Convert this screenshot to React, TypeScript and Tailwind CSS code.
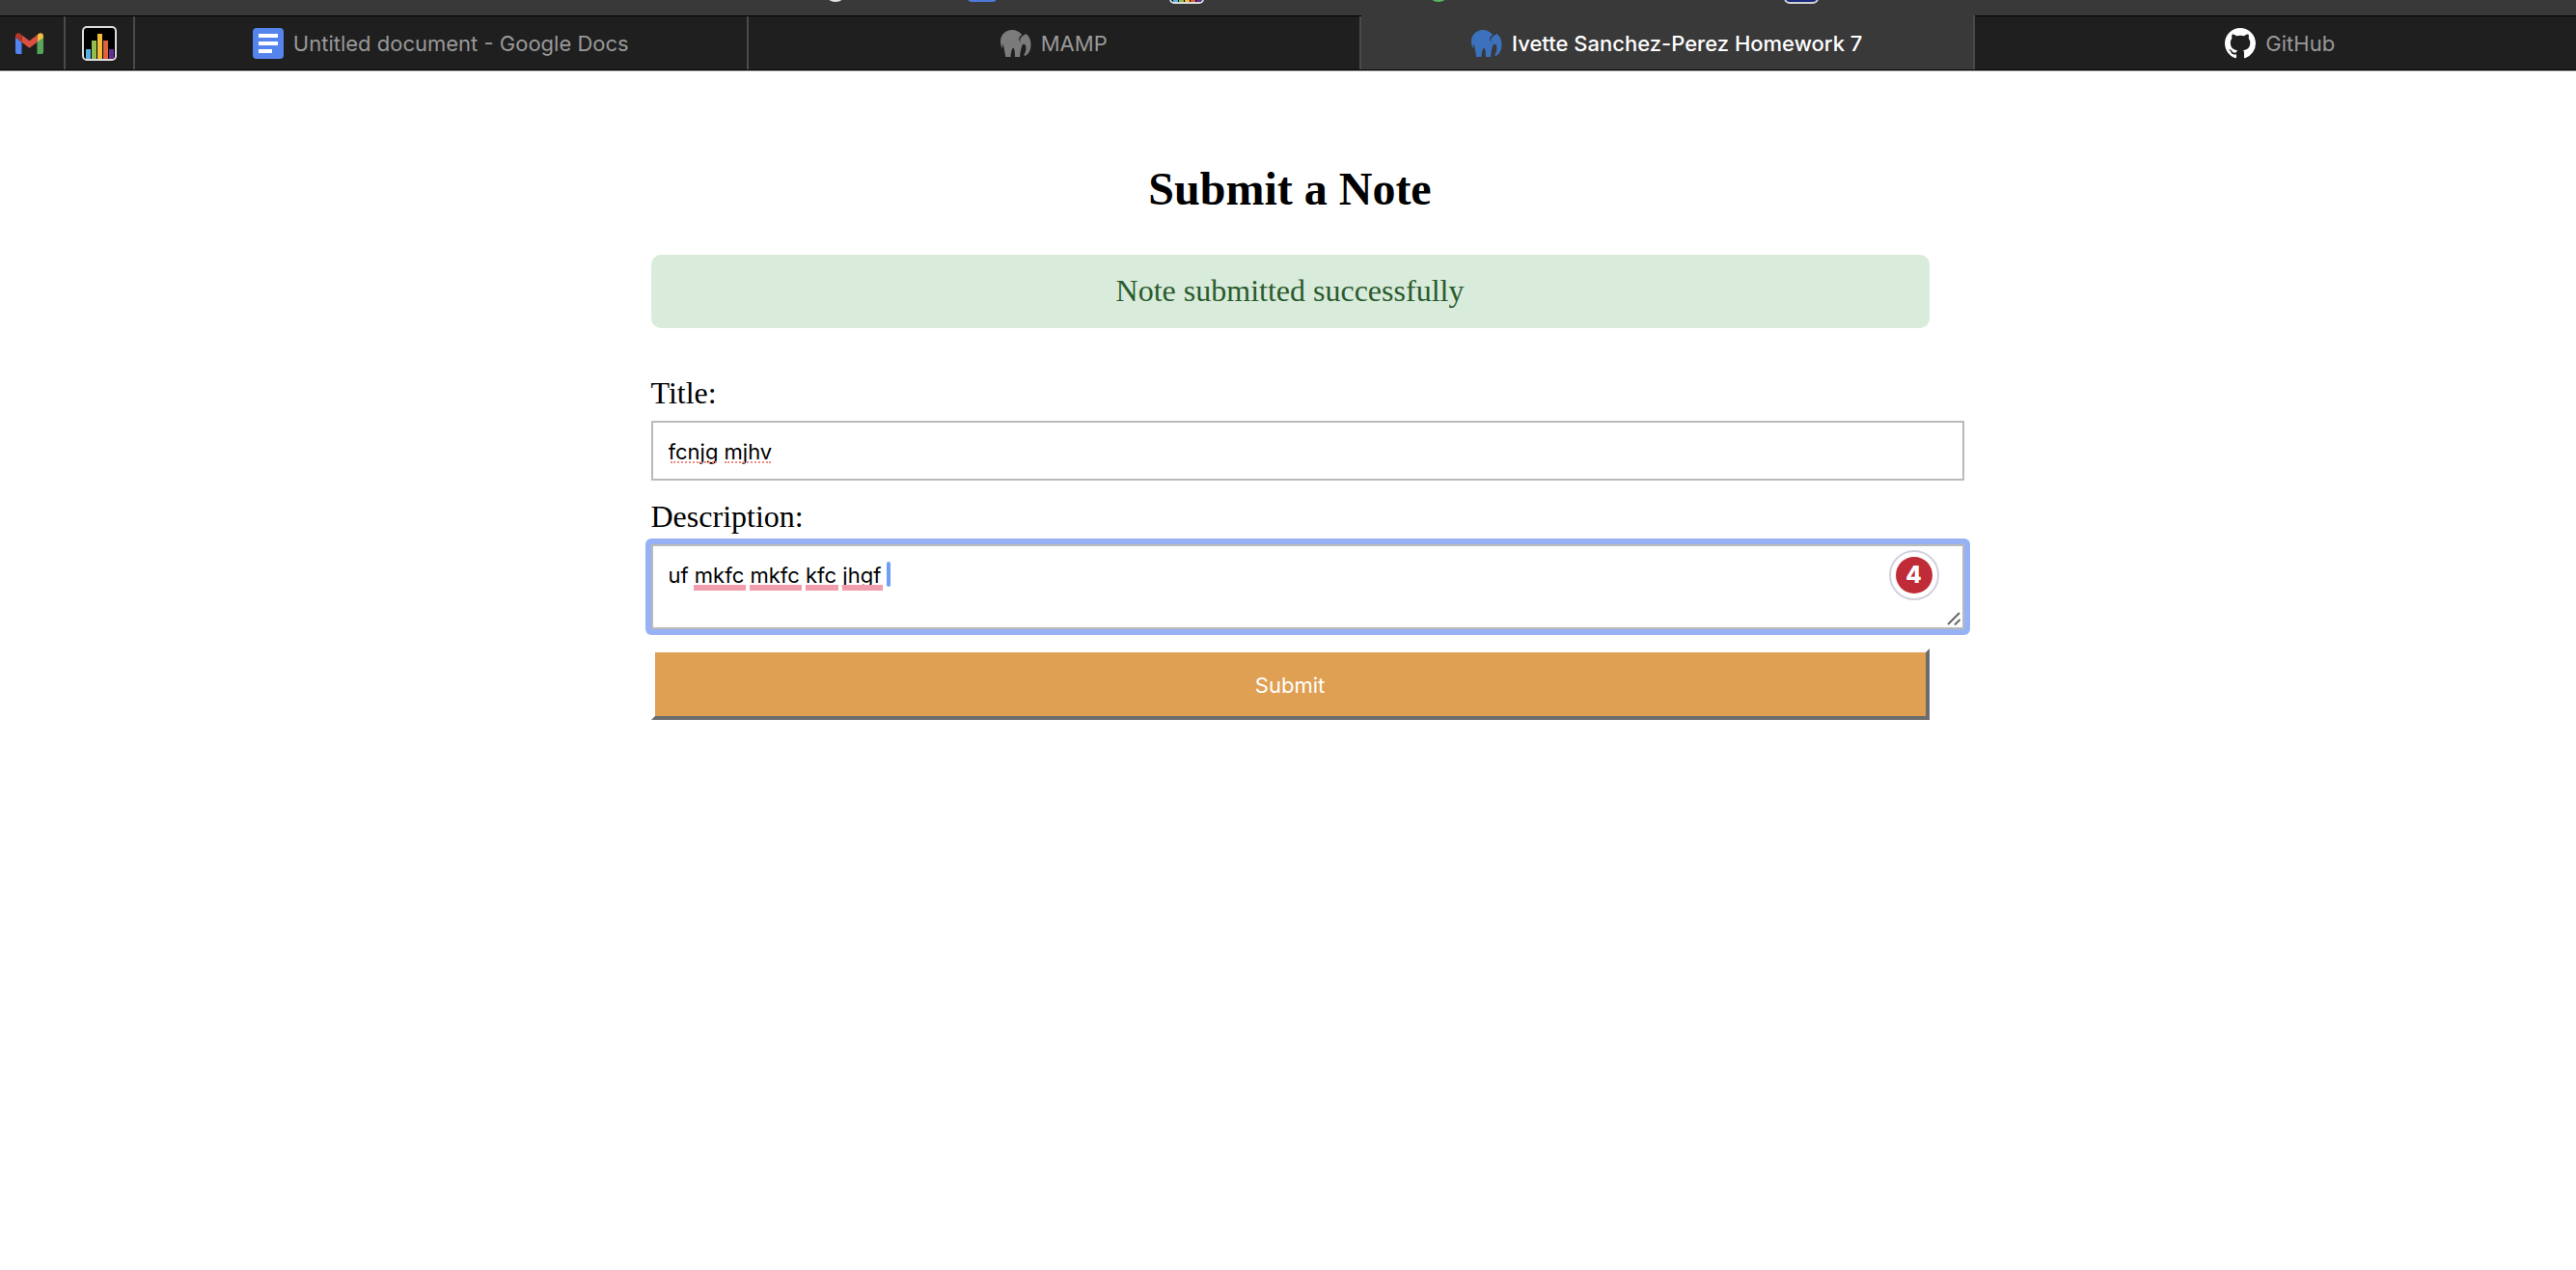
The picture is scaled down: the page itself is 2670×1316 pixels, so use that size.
import React from "react";

function GmailIcon() {
  return (
    <svg viewBox="0 0 29 22" className="h-[22px] w-[29px]" aria-hidden="true">
      <path d="M0 4.500V20a2 2 0 0 0 2 2h4.500V9.500L0 4.500z" fill="#5085ed" />
      <path d="M29 4.500V20a2 2 0 0 1-2 2h-4.500V9.500l6.500-5z" fill="#58a55c" />
      <path d="M22.500 2.200V9.800L29 5V3.300C29 .5 26-.6 24 1l-1.500 1.200z" fill="#f1bd42" />
      <path d="M6.500 2.200l8 6 8-6v7.600l-8 6-8-6V2.200z" fill="#d95040" />
      <path d="M0 3.300V5l6.500 4.800V2.200L5 1C3-.6 0 .5 0 3.300z" fill="#b5352a" />
    </svg>
  );
}

function BarsIcon({ className = "" }: { className?: string }) {
  return (
    <svg viewBox="0 0 36 36" className={"size-9 shrink-0 " + className} aria-hidden="true">
      <rect x="1" y="1" width="34" height="34" rx="4" fill="#000" stroke="#dcdcdc" strokeWidth="2" />
      <rect x="4" y="24" width="5" height="10" fill="#55b0e6" />
      <rect x="10" y="15" width="5" height="19" fill="#92bd4e" />
      <rect x="16" y="8" width="5" height="26" fill="#f2bd3d" />
      <rect x="22" y="15" width="5" height="19" fill="#e0633a" />
      <rect x="28" y="24" width="5" height="10" fill="#612f93" />
    </svg>
  );
}

function DocsIcon() {
  return (
    <svg viewBox="0 0 32 32" className="size-8" aria-hidden="true">
      <rect width="32" height="32" rx="4" fill="#5584ec" />
      <path d="M6 6h20v4H6zM6 14h20v4H6zM6 22h14v4H6z" fill="#fff" />
    </svg>
  );
}

function ElephantIcon({ className }: { className: string }) {
  return (
    <svg viewBox="0 0 32 28" className={"h-7 w-8 " + className} fill="currentColor" aria-hidden="true">
      <path d="M12 0c4.500 0 8.200 2 10.200 5-1.800 1.200-3.300 3-3 5 .3 2 2.200 3.200 4.300 4-2 3-2.800 8-3.500 14h-5c0-4-.2-8-1.800-9.500C11.500 19.500 11 23.500 10.500 28H5.300L3.300 17l-.8-3L2 19C.8 17.500 0 15 0 12 0 5 5 0 12 0z" />
      <path d="M26.500 4C30 6.500 31.500 10.500 31.500 15c0 5.500-2 9.800-6 12l-1.300-1c2.300-3 2.800-7 1.800-10.500-2.500-.5-5.500-2-5.700-4.700C20.200 8 23 6 26.500 4z" />
    </svg>
  );
}

function GitHubIcon() {
  return (
    <svg viewBox="0 0 16 16" className="size-8 text-white" fill="currentColor" aria-hidden="true">
      <path d="M8 0C3.580 0 0 3.580 0 8c0 3.540 2.290 6.530 5.470 7.590.4.070.55-.17.55-.38 0-.19-.01-.82-.01-1.490-2.010.37-2.530-.49-2.690-.94-.09-.23-.48-.94-.82-1.130-.28-.15-.68-.52-.01-.53.63-.01 1.080.58 1.230.82.72 1.210 1.870.87 2.330.66.07-.52.28-.87.51-1.070-1.780-.2-3.640-.89-3.640-3.950 0-.87.31-1.590.82-2.150-.08-.2-.36-1.020.08-2.120 0 0 .67-.21 2.200.82.64-.18 1.320-.27 2-.27s1.360.09 2 .27c1.530-1.040 2.200-.82 2.200-.82.44 1.100.16 1.920.08 2.120.51.56.82 1.270.82 2.150 0 3.070-1.870 3.750-3.650 3.950.29.25.54.73.54 1.480 0 1.070-.01 1.930-.01 2.200 0 .21.15.46.55.38A8.010 8.010 0 0 0 16 8c0-4.420-3.580-8-8-8z" />
    </svg>
  );
}

/* Lower edge of the favourites bar: only the bottoms of its icons show. */
function Favorites() {
  return (
    <div className="flex h-4 flex-col justify-start overflow-hidden bg-[#393939]" aria-hidden="true">
      <div className="-mt-8 flex h-9 items-end justify-center gap-[231px] pl-[69px]">
        <span className="mb-0.5 size-6 shrink-0 rounded-full bg-[#e4e4e4]" />
        <span className="mb-0.5 -ml-[106px] h-7 w-[30px] rounded-sm bg-[#4f7ad8]" />
        <BarsIcon className="-ml-[52px]" />
        <span className="mb-0.5 size-6 rounded-full bg-[#58b85c]" />
        <span className="ml-[115px] size-9 rounded-md border-2 border-[#d0d0d0] bg-[#1b2a80]" />
      </div>
    </div>
  );
}

function Tab({ icon, label, active = false }: { icon: React.ReactNode; label: string; active?: boolean }) {
  return (
    <a
      href="#"
      aria-current={active ? "page" : undefined}
      className={
        "flex flex-1 items-center justify-center gap-[10px] border-r-2 border-[#4a4a4a] text-[22px] leading-7 whitespace-nowrap " +
        (active ? "-mt-px bg-[#393939] pt-0.5 font-medium text-white" : "bg-[#1f1f1f] pt-px text-[#999999]")
      }
    >
      {icon}
      <span>{label}</span>
    </a>
  );
}

export default function App() {
  return (
    <div className="min-h-screen overflow-x-hidden bg-white">
      <header className="border-b border-[#b5b5b5] font-['Inter',sans-serif]">
        <Favorites />
        <nav aria-label="Tabs" className="-mr-3 flex h-[57px] border-y border-black bg-[#1f1f1f]">
          <a href="#" aria-label="Gmail" className="flex w-[68px] items-center border-r-2 border-[#4a4a4a] pl-4">
            <GmailIcon />
          </a>
          <a href="#" aria-label="Charts" className="flex w-[72px] items-center justify-center border-r-2 border-[#4a4a4a]">
            <BarsIcon />
          </a>
          <div className="flex flex-1">
            <Tab icon={<DocsIcon />} label="Untitled document - Google Docs" />
            <Tab icon={<ElephantIcon className="text-[#7b7b7b]" />} label="MAMP" />
            <Tab icon={<ElephantIcon className="text-[#3b71bd]" />} label="Ivette Sanchez-Perez Homework 7" active />
            <Tab icon={<GitHubIcon />} label="GitHub" />
          </div>
        </nav>
      </header>

      <main className="pt-[94px] pl-1 font-['Liberation_Serif',serif] text-[32px] leading-9 text-black">
        <div className="mx-auto w-full max-w-[1325px]">
          <h1 className="text-center text-5xl leading-[56px] font-bold">Submit a Note</h1>
          <p role="status" className="mt-10 rounded-[10px] bg-[#d9ebdb] pt-[19px] pb-[21px] text-center text-[#2a5b2d]">
            Note submitted successfully
          </p>

          <form className="mt-[49px]" onSubmit={(e) => e.preventDefault()}>
            <label htmlFor="title" className="block">
              Title:
            </label>
            <div className="relative mt-[11px] w-[calc(100%+36px)]">
              <input
                id="title"
                type="text"
                spellCheck={false}
                defaultValue="fcnjg mjhv"
                className="block w-full border-2 border-[#bababa] px-4 pt-[17px] pb-[15px] font-['Inter',sans-serif] text-[22px] leading-[26px] outline-none"
              />
              <div className="pointer-events-none absolute inset-x-0 bottom-[18px] flex gap-2 px-5" aria-hidden="true">
                <span className="w-12 border-b-2 border-dotted border-[#f08a80]" />
                <span className="w-12 border-b-2 border-dotted border-[#f08a80]" />
              </div>
            </div>

            <label htmlFor="description" className="mt-[19px] block">
              Description:
            </label>
            <div className="relative mt-[11px] w-[calc(100%+36px)] rounded-xs ring-6 ring-[#97b2f4]">
              <textarea
                id="description"
                spellCheck={false}
                rows={2}
                defaultValue="uf mkfc mkfc kfc jhgf "
                className="block w-full resize-none border-2 border-[#bababa] bg-white px-4 pt-[17px] pb-[15px] font-['Inter',sans-serif] text-[22px] leading-[26px] caret-transparent outline-none"
              />
              <div
                className="pointer-events-none absolute inset-0 flex items-start justify-between pt-1.5 pr-[26px] pl-11"
                aria-hidden="true"
              >
                <div className="flex items-end gap-1 pt-3">
                  <span className="-mb-1 h-1.5 w-[54px] bg-[#f09dad]" />
                  <span className="-mb-1 h-1.5 w-[54px] bg-[#f09dad]" />
                  <span className="-mb-1 h-1.5 w-[34px] bg-[#f09dad]" />
                  <span className="-mb-1 h-1.5 w-[42px] bg-[#f09dad]" />
                  <span className="h-[26px] w-1 rounded-sm bg-[#6f9dfa]" />
                </div>
                <span className="flex size-[52px] items-center justify-center rounded-full border-2 border-[#d2d2de] bg-white">
                  <span className="flex size-[38px] items-center justify-center rounded-full bg-[#bf2b36] font-['Inter',sans-serif] text-2xl font-extrabold text-white">
                    4
                  </span>
                </span>
              </div>
              <svg viewBox="0 0 14 14" className="absolute right-1 bottom-1 size-[14px]" aria-hidden="true">
                <path d="M1 13L13 1M8 13.500L13.500 8" stroke="#666" strokeWidth="2" fill="none" />
              </svg>
            </div>

            <button
              type="submit"
              className="mt-5 block w-full border-4 border-t-white border-r-[#6c6b6d] border-b-[#6c6b6d] border-l-white bg-[#dfa053] pt-[21px] pb-[19px] font-['Inter',sans-serif] text-[22px] leading-[26px] text-white"
            >
              Submit
            </button>
          </form>
        </div>
      </main>
    </div>
  );
}
